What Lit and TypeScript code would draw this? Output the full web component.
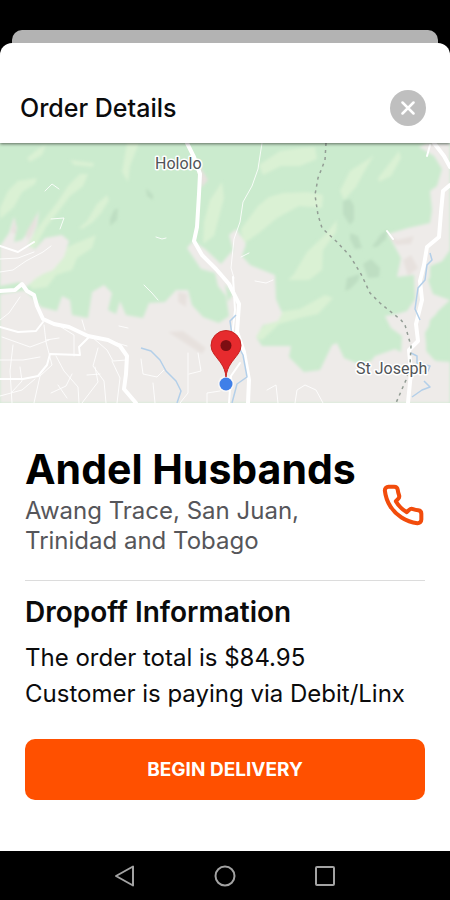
import { LitElement, html, css } from "lit";
import { customElement } from "lit/decorators.js";

@customElement("delivery-map")
class DeliveryMap extends LitElement {
  static styles = css`
    :host {
      display: block;
      height: 260px;
    }
    .map {
      display: block;
      width: 100%;
      height: 100%;
    }
    .forest { fill: #cbebce; }
    .meadow { fill: #daf1d4; }
    .shade { fill: #bedec2; }
    .town { fill: #eeebe9; }
    .blush { fill: #e7e1de; }
    .road, .street, .lane { fill: none; stroke: #ffffff; stroke-linecap: round; stroke-linejoin: round; }
    .road { stroke-width: 4; }
    .street { stroke-width: 2; }
    .lane { stroke-width: 1; opacity: 0.85; }
    .river { fill: none; stroke: #b3cfe9; stroke-width: 1.5; stroke-linejoin: round; }
    .border { fill: none; stroke: #939d95; stroke-width: 1.5; stroke-dasharray: 3 4; }
    .label {
      font-family: Roboto, "Liberation Sans", sans-serif;
      font-size: 16px;
      fill: #505357;
      stroke: #ffffff;
      stroke-width: 3px;
      stroke-linejoin: round;
      paint-order: stroke;
    }
  `;

  render() {
    return html`
      <svg class="map" viewBox="0 143 450 260" preserveAspectRatio="xMidYMid slice" role="img" aria-label="Dropoff location map">
        <defs>
          <filter id="soft" x="-5%" y="-5%" width="110%" height="110%"><feGaussianBlur stdDeviation="1.6" /></filter>
        </defs>
        <rect class="forest" y="143" width="450" height="260" />
        <g filter="url(#soft)">
          <path class="meadow" d="M0 208 8 191 18 181 37 178 35 184 22 192 14 207 0 219ZM30 240 42 222 56 204 68 186 80 174 88 174 83 186 70 196 58 212 46 227 37 244 28 255ZM79 228 87 221 97 204 107 195 109 200 101 213 93 222 82 229ZM58 252 74 244 96 235 92 248 77 258 72 270 56 275 47 287 32 289 25 277 45 262ZM27 158 38 149 46 145 42 155 30 162ZM122 172 127 143 139 143 130 166 128 182ZM70 160 94 163 93 167 74 165ZM204 222 210 200 222 182 224 198 214 236 203 244Z" />
          <path class="meadow" d="M259 165 280 151 301 148 315 147 317 159 300 166 281 166 263 175ZM241 229 258 206 269 197 283 193 308 192 323 195 322 208 299 206 277 218 259 233 243 244ZM340 191 350 171 370 158 374 155 364 172 356 187 344 200ZM378 178 389 164 399 151 401 158 391 176 379 182ZM294 274 307 252 325 235 337 220 336 232 323 250 322 270 309 280 288 280ZM279 312 300 309 325 295 333 298 318 314 300 318 279 324 262 340 252 337Z" />
          <path class="shade" d="M343 201 350 199 354 206 354 220 350 225 343 214ZM350 233 358 236 362 248 355 249 350 239ZM372 247 381 234 388 230 386 239 377 247ZM146 188 153 195 153 200 147 196ZM114 210 118 208 117 220 110 226 110 219ZM363 264 371 259 380 268 379 277 368 278ZM347 278 360 274 358 281 350 289 345 291Z" />
          <path class="town" d="M0 246 9 233 14 217 17 228 14 242 22 240 33 226 39 210 37 226 28 246 35 249 45 238 62 235 69 241 64 257 53 270 43 274 35 279 24 289 31 296 41 307 57 311 62 296 70 300 72 315 88 318 92 292 104 285 112 293 108 310 116 314 120 301 126 315 143 318 149 303 165 302 176 290 188 290 192 305 203 317 219 323 229 316 226 296 218 286 215 273 201 269 187 248 193 241 205 249 221 264 233 250 229 235 236 229 246 244 242 256 250 265 275 275 276 299 282 313 278 321 263 325 256 337 262 346 276 346 291 346 289 357 304 372 320 370 332 345 337 343 344 358 359 364 371 361 375 356 395 349 401 352 402 336 391 328 385 316 397 314 407 311 415 299 414 275 397 277 401 258 388 234 408 228 430 223 432 210 430 191 437 186 442 169 434 156 419 147 427 143 450 143 450 250 438 267 428 280 433 294 450 300 438 311 425 333 427 352 436 361 450 362 450 403 0 403Z" />
          <path class="forest" d="M0 286 20 282 27 290 0 294ZM225 284 233 294 228 302ZM430 266 450 258 450 283 441 284 430 278ZM430 320 450 301 450 360 434 360 426 350Z" />
          <path class="blush" d="M11 232 15 218 16 234ZM26 233 37 214 36 226 28 241ZM198 163 208 180 201 188ZM168 332 183 331 206 348 202 354ZM403 260 411 255 418 268 408 276ZM389 235 397 240 414 236 411 244 396 245ZM178 292 187 294 186 307 178 302Z" />
        </g>
        <path class="lane" d="M45 191 52 184 59 189M51 219 64 218 60 229M156 237 162 239 166 238M144 285 152 293 158 300M0 259 18 258 34 252M0 272 13 270 26 261 43 252 51 246M20 297 9 313 0 320M2 337 30 347 49 340M0 360 23 360 40 357M13 345 10 371 12 403M44 325 46 342 52 365 40 376 34 403M56 356 64 371 78 387 79 403M72 374 66 386 51 393M92 337 107 350 113 361 127 360M98 348 93 366 104 381 106 403M112 361 120 378 117 403M74 356 74 335 61 327M82 403 98 382 95 367M141 359 143 374 157 377 164 370M153 383 155 403M188 353 188 393 180 403M198 353 201 371 189 374M207 403 207 393 220 391M273 280 266 283 255 281M267 390 276 385 278 403M295 403 297 390 305 385 316 390 323 403M241 257 249 253M20 367 22 381 12 392M0 396 22 390 35 379M82 320 85 330M119 326 128 328M59 338 46 340M127 346 117 343M67 398 58 385M100 374 87 375" />
        <path class="lane" d="M262 143 258 169 252 186 243 202 240 222 234 239 231 268 234 278" />
        <path class="street" d="M0 379 23 379 38 376 47 365 50 354 80 355 79 347 89 337M0 327 18 332 36 331 43 322M387 231 393 239M430 145 427 156M0 246 18 252 34 242M233 277 235 310 231 346M229 403 231 376 240 363" />
        <path class="road" d="M0 291 15 290 22 284 27 291 34 295 37 306 43 319 54 324 69 327 88 336 108 340 120 346 127 356 126 374 124 389 136 403" />
        <path class="road" d="M187 143 194 157 200 174 199 194 197 227 194 241 202 255 216 269 229 284 239 304 237 332 244 352 249 380 248 403" />
        <path class="road" d="M434 143 444 156 450 167M450 185 443 191 441 212 439 237 427 247 424 265 420 281 422 300 416 324 418 341 409 350 411 372 408 403" />
        <path class="river" d="M141 348 151 351 160 360 166 371 176 381 181 391 177 403M430 253 432 260 427 265 425 280 418 288 415 309 420 320M236 315 230 321 232 335 243 355 247 377 237 384 232 403M411 353 417 356 417 363 430 366 428 371 420 372M424 381 430 387 422 390 412 397" />
        <path class="border" d="M326 143 325 160 318 178 315 195 318 215 322 228 337 242 350 256 361 274 370 293 380 303 401 320 405 325 411 346 410 365 406 380 396 403" />
        <text class="label" x="155" y="169">Hololo</text>
        <text class="label" x="356" y="374">St Joseph</text>
        <circle cx="226" cy="384" r="8" fill="#ffffff" opacity="0.6" />
        <circle cx="226" cy="384" r="6.500" fill="#3f7fe8" />
        <path d="M226 377C225 366 219 361 214 354A15 15 0 0 1 211 345.500a15 15 0 0 1 30 0A15 15 0 0 1 238 354C233 361 227 366 226 377Z" fill="#e62b2e" stroke="#c5221f" stroke-width="1" />
        <circle cx="226" cy="345.500" r="5.500" fill="#7d0e12" />
      </svg>
    `;
  }
}

@customElement("app-root")
class AppRoot extends LitElement {
  static styles = css`
    :host {
      display: flex;
      flex-direction: column;
      min-height: 100vh;
      box-sizing: border-box;
      padding-top: 30px;
      background: #000000;
      color: #0b0b0c;
      font-family: Inter, "Liberation Sans", sans-serif;
    }
    h1, h2, h3, p { margin: 0; }
    button {
      border: 0;
      padding: 0;
      background: none;
      font: inherit;
      cursor: pointer;
    }
    svg { display: block; }
    .behind {
      height: 13px;
      margin: 0 12px;
      border-radius: 10px 10px 0 0;
      background: #b3b3b3;
    }
    .sheet {
      flex: 1;
      display: flex;
      flex-direction: column;
      border-radius: 12px 12px 0 0;
      background: #ffffff;
      overflow: hidden;
    }
    .header {
      display: flex;
      align-items: center;
      justify-content: space-between;
      padding: 47px 24px 17px 20px;
      position: relative;
      box-shadow: 0 1px 3px rgba(0, 0, 0, 0.55);
    }
    .title {
      font-size: 25px;
      line-height: 32px;
      font-weight: 500;
    }
    .close {
      display: grid;
      place-items: center;
      width: 36px;
      height: 36px;
      border-radius: 50%;
      background: #bfbfbf;
    }
    .content { padding: 39px 25px 0; }
    .customer {
      display: flex;
      align-items: center;
      justify-content: space-between;
      padding-bottom: 24px;
      border-bottom: 1px solid #dcdcdc;
    }
    .name {
      font-size: 41px;
      line-height: 54px;
      font-weight: 700;
      color: #000000;
    }
    .address {
      max-width: 300px;
      font-size: 24px;
      line-height: 30px;
      color: #56565a;
    }
    .call {
      padding-top: 12px;
    }
    .subtitle {
      padding-top: 15px;
      font-size: 28px;
      line-height: 32px;
      font-weight: 600;
    }
    .info {
      padding-top: 12px;
      font-size: 24px;
      line-height: 36px;
    }
    .begin {
      width: 100%;
      height: 61px;
      margin-top: 27px;
      border-radius: 10px;
      background: #ff5000;
      color: #ffffff;
      font-size: 19px;
      font-weight: 700;
    }
    .navbar {
      display: flex;
      align-items: center;
      justify-content: center;
      gap: 76px;
      height: 49px;
      background: #000000;
    }
  `;

  render() {
    return html`
      <div class="behind"></div>
      <main class="sheet">
        <header class="header">
          <h1 class="title">Order Details</h1>
          <button class="close" aria-label="Close">
            <svg width="14" height="14" viewBox="0 0 14 14" fill="none" stroke="#ffffff" stroke-width="2.500" stroke-linecap="round">
              <path d="M1.500 1.500 12.500 12.500M12.500 1.500 1.500 12.500" />
            </svg>
          </button>
        </header>
        <delivery-map></delivery-map>
        <div class="content">
          <section class="customer">
            <div>
              <h2 class="name">Andel Husbands</h2>
              <p class="address">Awang Trace, San Juan, Trinidad and Tobago</p>
            </div>
            <button class="call" aria-label="Call customer">
              <svg width="44" height="44" viewBox="0 0 24 24" fill="none" stroke="#f24c0c" stroke-width="2.200" stroke-linecap="round" stroke-linejoin="round">
                <path d="M22 16.920v3a2 2 0 0 1-2.180 2 19.790 19.790 0 0 1-8.630-3.070 19.500 19.500 0 0 1-6-6 19.790 19.790 0 0 1-3.070-8.670A2 2 0 0 1 4.110 2h3a2 2 0 0 1 2 1.720 12.840 12.840 0 0 0 .7 2.810 2 2 0 0 1-.45 2.110L8.090 9.910a16 16 0 0 0 6 6l1.270-1.270a2 2 0 0 1 2.110-.45 12.840 12.840 0 0 0 2.810.7A2 2 0 0 1 22 16.920z" />
              </svg>
            </button>
          </section>
          <section>
            <h3 class="subtitle">Dropoff Information</h3>
            <div class="info">
              <p>The order total is $84.95</p>
              <p>Customer is paying via Debit/Linx</p>
            </div>
          </section>
          <button class="begin">BEGIN DELIVERY</button>
        </div>
      </main>
      <nav class="navbar" aria-label="System">
        <button aria-label="Back">
          <svg width="24" height="24" viewBox="0 0 24 24" fill="none" stroke="#a3a3a3" stroke-width="2" stroke-linejoin="round"><path d="M20 2.500V21.500L3 12Z" /></svg>
        </button>
        <button aria-label="Home">
          <svg width="24" height="24" viewBox="0 0 24 24" fill="none" stroke="#a3a3a3" stroke-width="2"><circle cx="12" cy="12" r="9.500" /></svg>
        </button>
        <button aria-label="Recent apps">
          <svg width="24" height="24" viewBox="0 0 24 24" fill="none" stroke="#a3a3a3" stroke-width="2"><rect x="3" y="3" width="18" height="18" rx="1" /></svg>
        </button>
      </nav>
    `;
  }
}
